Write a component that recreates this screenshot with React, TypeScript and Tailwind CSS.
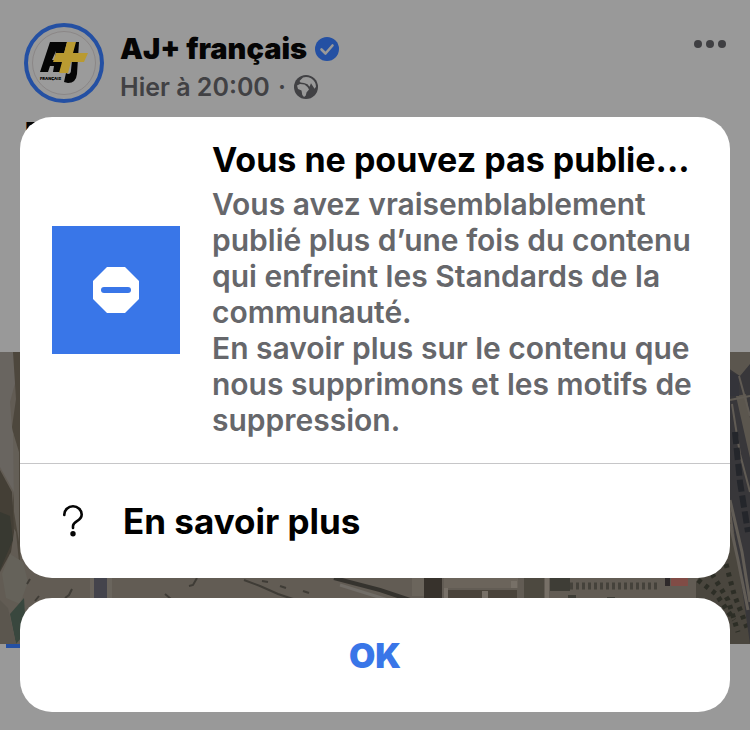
const Avatar = () => (
  <svg viewBox="0 0 80 80" className="size-20 shrink-0" aria-label="AJ+ français">
    <circle cx="40" cy="40" r="38" fill="none" stroke="#2450a3" strokeWidth="4" />
    <circle cx="40" cy="40" r="31.5" fill="#9b9b9b" stroke="#8b8787" strokeWidth="1" />
    <path
      fill="#050505"
      fillRule="evenodd"
      d="M26 19h17l-3 12-3 18h-8l1-6h-4l-2 6h-8zM32 28l-4 9h3z"
    />
    <path fill="#050505" d="M50 19h5l-2 32q-1 9-9 9l-4-1 2-9 2 1q3 0 3-4z" />
    <path fill="#b99a31" d="M43 19h9l-3 11h15l-4 9H47l-3 11h-9l3-11h-9l3-9h8z" />
    <text
      x="16"
      y="57"
      fill="#050505"
      className="font-['Inter',sans-serif] text-[4px] font-black"
    >
      FRANÇAIS
    </text>
  </svg>
);

const VerifiedBadge = () => (
  <svg viewBox="0 0 24 24" className="size-6 shrink-0" aria-label="Compte vérifié">
    <circle cx="12" cy="12" r="12" fill="#2450a3" />
    <path
      d="M6.5 12.5l4 4 7-8"
      fill="none"
      stroke="#999"
      strokeWidth="2.6"
      strokeLinecap="round"
      strokeLinejoin="round"
    />
  </svg>
);

const GlobeIcon = () => (
  <svg viewBox="0 0 24 24" className="size-6 shrink-0" aria-label="Public">
    <circle cx="12" cy="12" r="12" fill="#414144" />
    {/* northern landmass, then Africa */}
    <path
      fill="#999"
      d="M9 2.500q4-1.200 8 .8 5 3 5 8.500l-1.500 2-3.500-5.500-1.500 3.500-2-2.500L10 8 6.500 7.500 5.500 6z"
    />
    <path
      fill="#999"
      d="M3 10.500l3-1.500 4.500.5 3 2.500 1.500 2.500-2.500 3-.7 3-1.800 1.500L8.300 20 7.500 15.500 4 14z"
    />
  </svg>
);

const AerialPhoto = () => (
  <svg
    viewBox="0 0 750 292"
    preserveAspectRatio="none"
    className="block h-[292px] w-full"
    aria-label="Vue aérienne"
  >
    <rect width="750" height="292" fill="#625c54" />
    {/* river bed on the left */}
    <path fill="#696560" d="M0 0h13l5 20-8 30 2 25 6 30-4 35-14-25z" />
    <path fill="#4d473d" d="M13 0h7v220l-4-40-6-10 4-30 4-35-6-30 4-28z" />
    <path fill="#645f57" d="M13 80l6 20v90l-5-30z" />
    <path fill="#443f36" d="M0 118l12 22 2 40-3 20-11 20z" />
    <path fill="#383931" d="M0 160l10 4 3 24-13 30z" />
    <path fill="#65625a" d="M2 222l8-20 13 8 5 20-8 22-14-6z" />
    <path fill="#39473e" d="M10 262l14-16 2 34-10 12z" />
    <path fill="#5b564e" d="M0 248l8 8 8 36H0z" />
    {/* dirt ground and roads */}
    <path fill="#6a655d" d="M90 222h22v30H90z" />
    <path fill="#44444c" d="M94 222h13v30H94z" />
    <path
      fill="none"
      stroke="#3f3c36"
      strokeWidth="2"
      d="M27 232l3-5M35 249l4-5M65 246l4-3 3-6M189 234l4-1 4-7M165 242l6 5M244 228l16 6 18 8 24 8M262 229l6 1M280 234l6 2M303 239l6 2"
    />
    <path fill="none" stroke="#35332e" strokeWidth="4" d="M334 226l46 12 60 20" />
    <path fill="none" stroke="#716d67" strokeWidth="3" d="M340 233l80 25" />
    {/* buildings */}
    <path fill="#6b655c" d="M412 222h12v22h-12z" />
    <path fill="#37322c" d="M424 224h18v22h-18z" />
    <path fill="#6b645b" d="M444 224h74v12h-74z" />
    <path fill="#4a443b" d="M448 238h69v16h-69z" />
    <path fill="#777067" d="M444 236h4v16h-4zM482 239h6v10h-6zM511 229h6v7h-6zM545 222h4v30h-4z" />
    <path fill="#4d4940" d="M524 222h20v30h-20z" />
    <path fill="#3e3d36" d="M550 225h20v14h-20zM568 243h8v8h-8zM607 245h8v3h-8z" />
    <path
      fill="none"
      stroke="#45423b"
      strokeWidth="7"
      strokeDasharray="3 3"
      d="M570 234h88"
    />
    <path fill="#2e292a" d="M665 225h5v9h-5z" />
    <path fill="#814c46" d="M671 225h17v9h-17z" />
    {/* shrubs and railway on the right */}
    <path fill="#4a463e" d="M696 230l34-60 20 60v62h-54z" />
    <path
      fill="none"
      stroke="#2d2e26"
      strokeWidth="5"
      strokeDasharray="4 5"
      d="M698 228l18 14 18 26M712 222l16 26 10 32M726 212l8 30 14 36"
    />
    <path fill="#38373a" d="M728 0h22v292l-20-140z" />
    <path fill="#5b564e" d="M728 0h22v12l-10 12-12-8zM736 44l10-2 4 24v40z" />
    <path fill="#34343a" d="M730 20l9 4v20h-9z" />
    <path fill="none" stroke="#605b54" strokeWidth="2" d="M730 48l20-4M732 52l8 50 10 38M739 24l11 40" />
    <path
      fill="none"
      stroke="#24262b"
      strokeWidth="6"
      strokeDasharray="12 4"
      d="M735 80l5 50 8 50"
    />
    <path fill="none" stroke="#625d56" strokeWidth="3" d="M730 148l12 52 8 50M730 172l8 36 10 50" />
  </svg>
);

const Post = () => (
  <article>
    <header className="flex items-start gap-4 px-6 pt-[23px]">
      <Avatar />
      <div className="min-w-0 flex-1 pt-2">
        <h1 className="flex items-center gap-2 text-[29px] leading-9 font-black text-[#050505]">
          AJ+ français
          <VerifiedBadge />
        </h1>
        <p className="flex items-center gap-2 text-[25px] leading-10 font-semibold text-[#414144]">
          Hier à 20:00 <span>·</span>
          <GlobeIcon />
        </p>
      </div>
      <button type="button" aria-label="Plus d’options" className="mt-[17px] flex gap-1 text-[#3f3f42]">
        <span className="size-2 rounded-full bg-current" />
        <span className="size-2 rounded-full bg-current" />
        <span className="size-2 rounded-full bg-current" />
      </button>
    </header>
    <p className="mt-2 px-6 text-[30px] leading-9 font-medium text-[#050505]">F</p>
    <div className="mt-[201px]">
      <AerialPhoto />
      <div className="ml-1.5 h-1 w-1/2 bg-[#2450a3]" />
    </div>
  </article>
);

const StopIcon = () => (
  <div className="flex size-32 shrink-0 items-center justify-center bg-[#3976e8]">
    <svg viewBox="0 0 46 46" className="size-[46px]" aria-hidden="true">
      <path fill="#fff" d="M14 0h18l14 14v18L32 46H14L0 32V14z" />
      <rect x="8" y="20" width="30" height="6" rx="3" fill="#3976e8" />
    </svg>
  </div>
);

const QuestionIcon = () => (
  <svg viewBox="0 0 20 32" className="h-8 w-5 shrink-0" aria-hidden="true">
    <path
      d="M1.300 10v-.5a8.700 8.200 0 0 1 17.400 0c0 7-8.700 6-8.700 11.500v2"
      fill="none"
      stroke="#050505"
      strokeWidth="2.600"
      strokeLinecap="round"
    />
    <circle cx="10" cy="28.800" r="2.700" fill="#050505" />
  </svg>
);

const App = () => {
  return (
    <div className="relative min-h-screen overflow-hidden bg-[#999999] font-['Inter','Liberation_Sans',sans-serif]">
      <Post />
      <div
        role="dialog"
        aria-labelledby="dialog-title"
        className="absolute inset-x-5 top-[117px] flex flex-col gap-5"
      >
        <div className="overflow-hidden rounded-[32px] bg-white">
          <div className="flex items-center gap-8 border-b border-[#c6c6c8] py-[25px] pr-5 pl-8">
            <StopIcon />
            <div className="min-w-0 flex-1">
              <h2
                id="dialog-title"
                className="mb-2 text-[34px] leading-9 font-bold whitespace-nowrap text-black"
              >
                Vous ne pouvez pas publie...
              </h2>
              <p className="text-[30px] leading-9 font-semibold text-[#66676b]">
                Vous avez vraisemblablement publié plus d’une fois du contenu qui
                enfreint les Standards de la communauté.
                <br />
                En savoir plus sur le contenu que nous supprimons et les motifs de
                suppression.
              </p>
            </div>
          </div>
          <button
            type="button"
            className="flex h-[114px] w-full items-center gap-10 px-[43px] text-left text-[35px] font-bold text-black"
          >
            <QuestionIcon />
            En savoir plus
          </button>
        </div>
        <button
          type="button"
          className="h-[114px] rounded-[32px] bg-white text-[34px] font-black text-[#3976e8]"
        >
          OK
        </button>
      </div>
    </div>
  );
};

export default App;
